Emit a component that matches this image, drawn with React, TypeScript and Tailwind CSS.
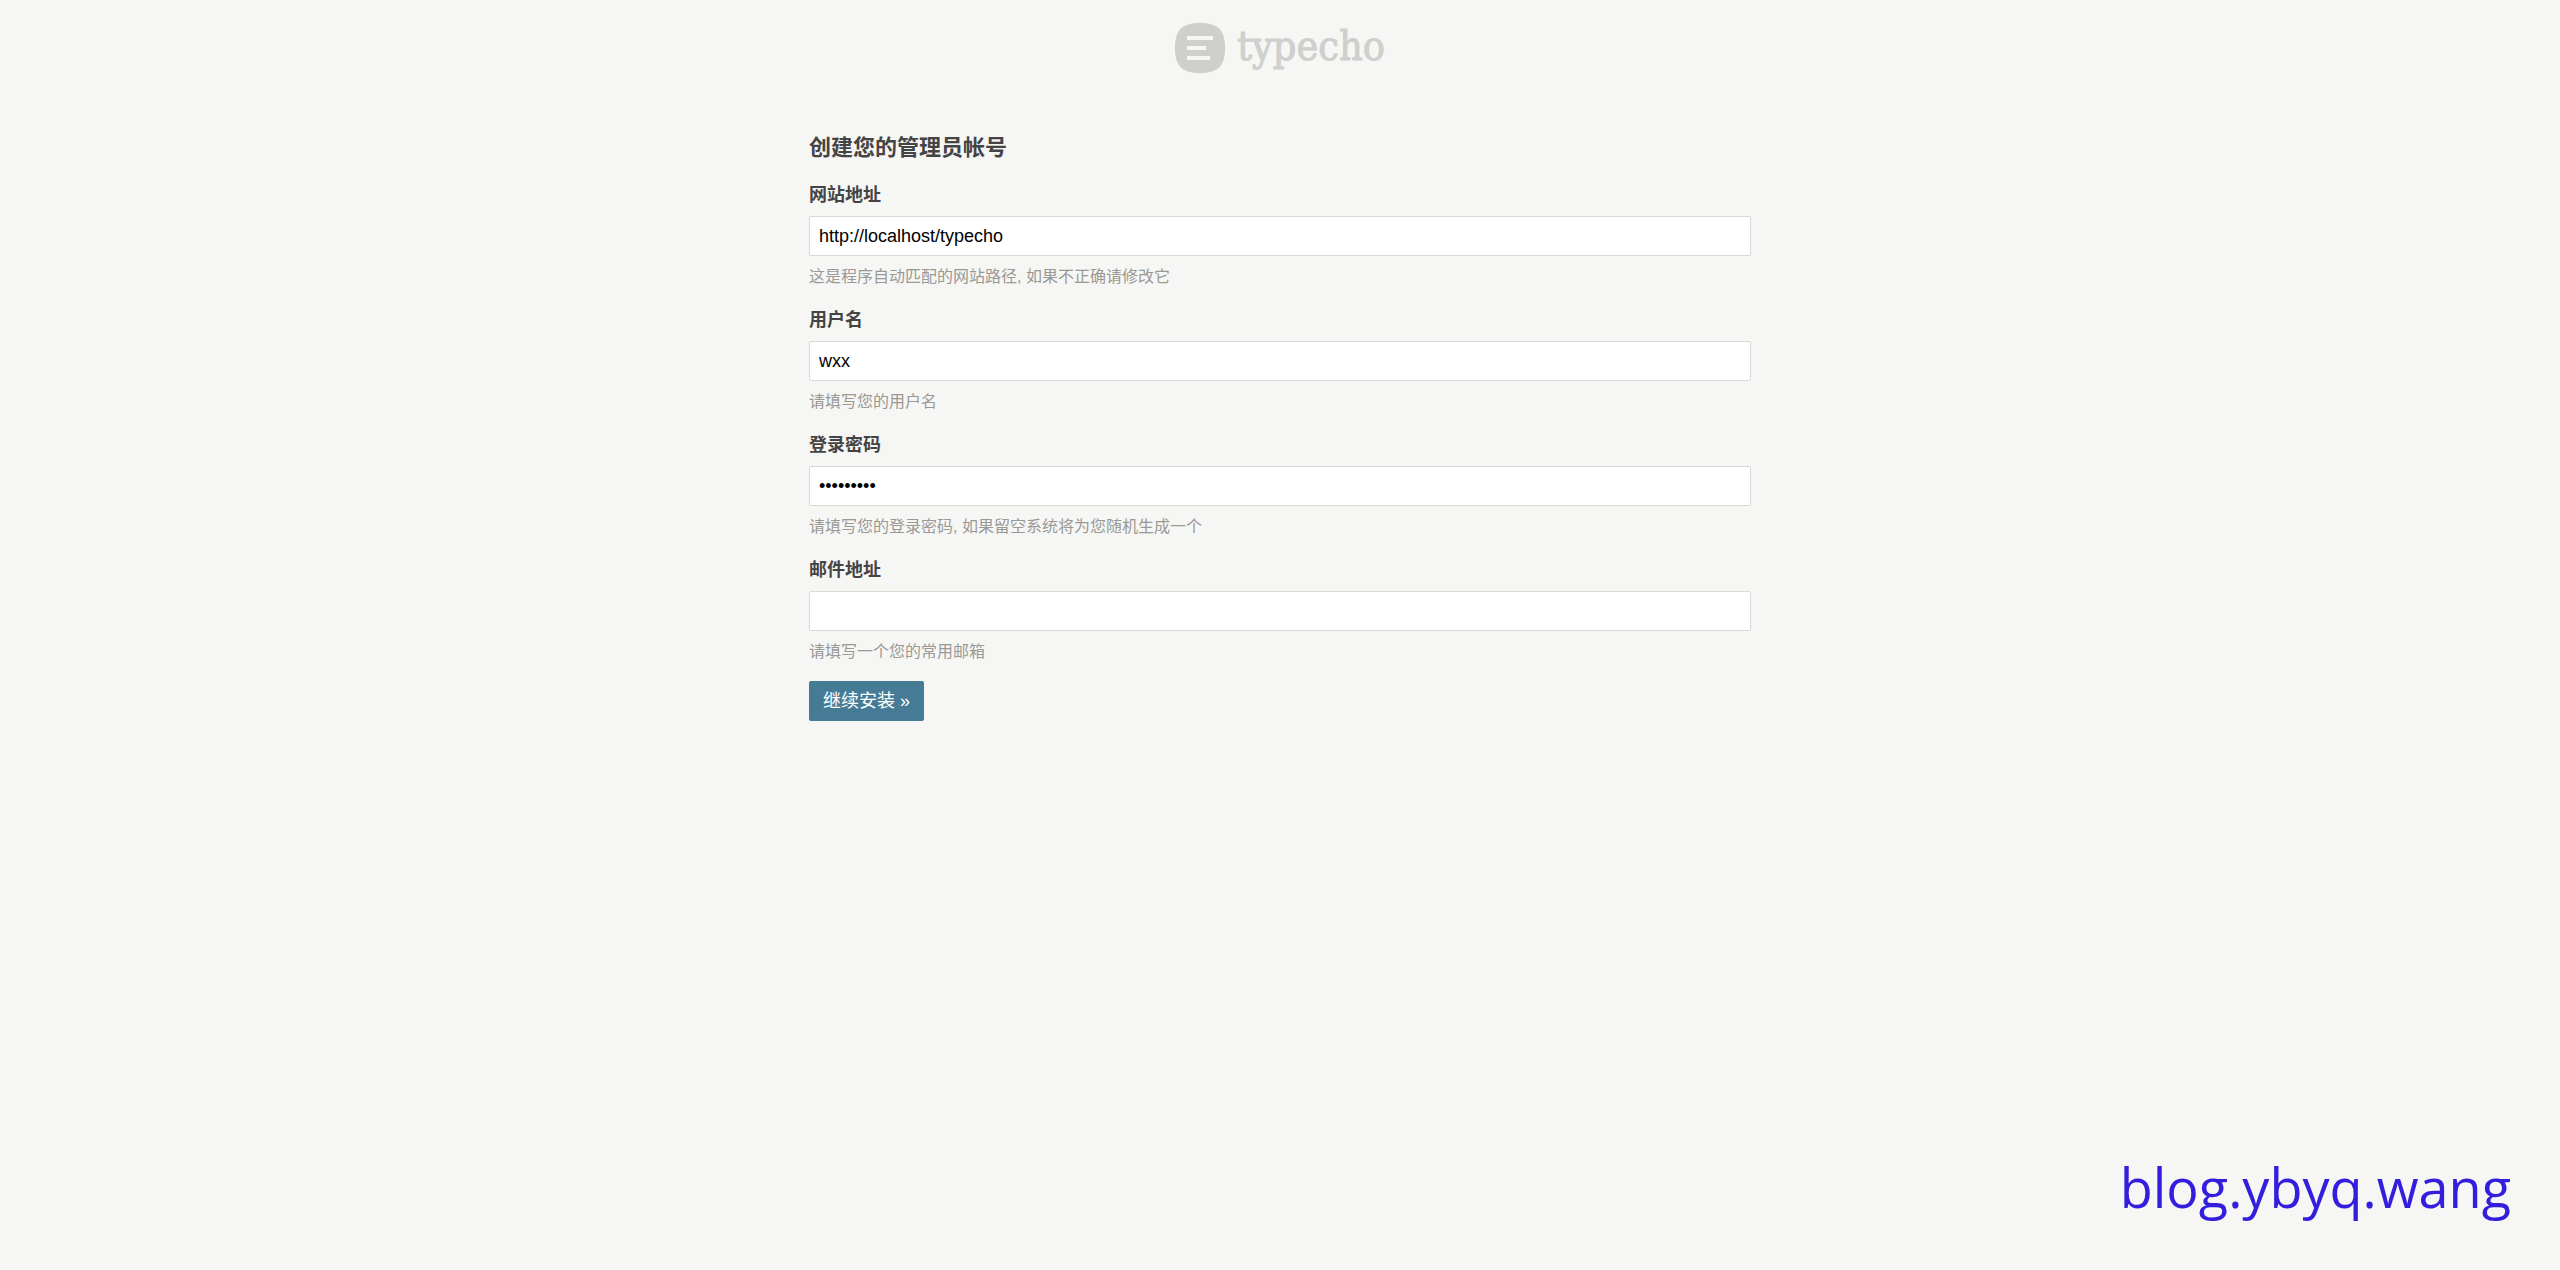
import type { InputHTMLAttributes } from "react"

interface FieldProps extends InputHTMLAttributes<HTMLInputElement> {
    id: string
    label: string
    hint: string
}

function Logo() {
    return (
        <h1 className="flex items-center justify-center gap-3 text-[#cfcfcd]">
            <svg viewBox="0 0 50 50" className="size-[50px]" aria-hidden="true">
                <path
                    fill="currentColor"
                    d="M25 0C43 0 50 7 50 25S43 50 25 50 0 43 0 25 7 0 25 0Z"
                />
                <path fill="#f6f6f4" d="M12 13h26v4H12zM12 23h19v4H12zM12 33h23v4H12z" />
            </svg>
            <span className="pb-1 font-['DejaVu_Serif_Condensed','DejaVu_Serif',serif] text-[41px] leading-[46px] [-webkit-text-stroke:1px_currentColor]">
                typecho
            </span>
        </h1>
    )
}

function Field({ id, label, hint, ...props }: FieldProps) {
    return (
        <div className="mb-[15px]">
            <label htmlFor={id} className="block mb-[7px] text-lg leading-7 font-bold">
                {label}
            </label>
            <input
                id={id}
                name={id}
                aria-describedby={`${id}-hint`}
                className="block w-full h-10 px-[9px] rounded-xs border border-[#d9d9d6] bg-white text-lg text-black"
                {...props}
            />
            <p id={`${id}-hint`} className="mt-[7px] text-base leading-7 text-[#999996]">
                {hint}
            </p>
        </div>
    )
}

export default function App() {
    return (
        <div className="relative min-h-screen bg-[#f6f6f4] pt-[23px] font-['Liberation_Sans','Noto_Sans_CJK_SC',sans-serif] text-[#444]">
            <Logo />

            <main className="mx-auto mt-[59px] w-full max-w-[942px]">
                <form onSubmit={(e) => e.preventDefault()}>
                    <h2 className="mb-[17px] text-[22px] leading-8 font-bold">创建您的管理员帐号</h2>

                    <Field
                        id="userUrl"
                        label="网站地址"
                        hint="这是程序自动匹配的网站路径, 如果不正确请修改它"
                        type="text"
                        defaultValue="http://localhost/typecho"
                    />
                    <Field
                        id="userName"
                        label="用户名"
                        hint="请填写您的用户名"
                        type="text"
                        defaultValue="wxx"
                    />
                    <Field
                        id="userPassword"
                        label="登录密码"
                        hint="请填写您的登录密码, 如果留空系统将为您随机生成一个"
                        type="password"
                        defaultValue="typecho12"
                    />
                    <Field id="userMail" label="邮件地址" hint="请填写一个您的常用邮箱" type="text" />

                    <button
                        type="submit"
                        className="h-10 px-[14px] rounded-xs bg-[#467b96] text-lg text-white"
                    >
                        继续安装 »
                    </button>
                </form>
            </main>

            {/* Site mark */}
            <div className="absolute right-[49px] bottom-[46px] font-['Open_Sans',sans-serif] text-[54px] leading-[74px] text-[#321edc]">
                blog.ybyq.wang
            </div>
        </div>
    )
}
